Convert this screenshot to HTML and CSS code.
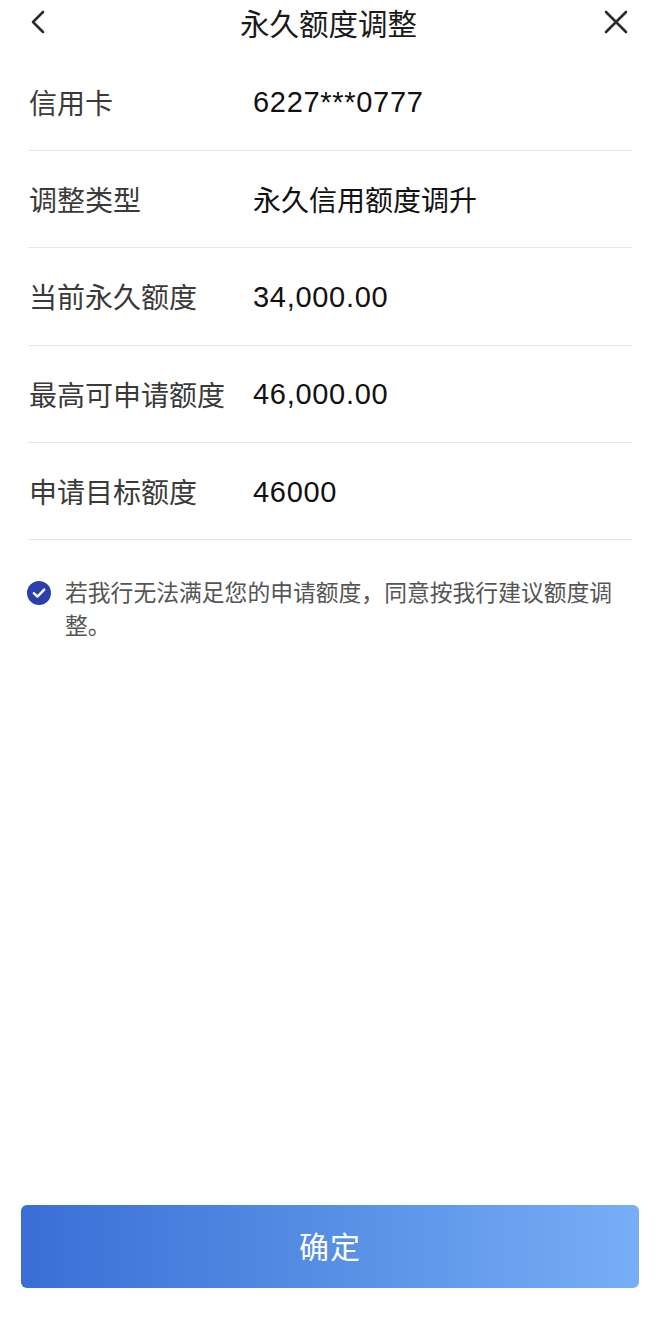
FILE: index.html
```html
<!DOCTYPE html>
<html lang="zh-CN">
<head>
<meta charset="utf-8">
<title>永久额度调整</title>
<link rel="stylesheet" href="styles.css">
</head>
<body>
<div class="page">
  <header class="nav">
    <span class="nav-btn back">
      <svg width="24" height="28" viewBox="0 0 24 28"><path d="M16 4 L6 14 L16 24" fill="none" stroke="#2b2b2b" stroke-width="2.6" stroke-linecap="round" stroke-linejoin="round"/></svg>
    </span>
    <h1 class="title">永久额度调整</h1>
    <span class="nav-btn close">
      <svg width="26" height="26" viewBox="0 0 26 26"><path d="M3 3 L23 23 M23 3 L3 23" fill="none" stroke="#2b2b2b" stroke-width="2.6" stroke-linecap="round"/></svg>
    </span>
  </header>

  <ul class="list">
    <li class="row"><span class="label">信用卡</span><span class="value">6227***0777</span></li>
    <li class="row"><span class="label">调整类型</span><span class="value cjk">永久信用额度调升</span></li>
    <li class="row"><span class="label">当前永久额度</span><span class="value">34,000.00</span></li>
    <li class="row"><span class="label">最高可申请额度</span><span class="value">46,000.00</span></li>
    <li class="row"><span class="label">申请目标额度</span><span class="value">46000</span></li>
  </ul>

  <div class="agree">
    <span class="check">
      <svg width="24" height="24" viewBox="0 0 24 24"><circle cx="12" cy="12" r="12" fill="#2b3eab"/><path d="M6.8 12.2 L10.4 15.6 L17.2 8.6" fill="none" stroke="#fff" stroke-width="2.4" stroke-linecap="round" stroke-linejoin="round"/></svg>
    </span>
    <p class="agree-text">若我行无法满足您的申请额度，同意按我行建议额度调整。</p>
  </div>

  <div class="spacer"></div>

  <div class="footer">
    <button class="confirm">确定</button>
  </div>
</div>
</body>
</html>
```

FILE: styles.css
```css
* { box-sizing: border-box; }
html, body { margin: 0; padding: 0; background: #fff; }
body {
  font-family: "Noto Sans CJK SC", "Noto Sans", sans-serif;
  color: #333;
}
.page {
  width: 660px;
  height: 1342px;
  display: flex;
  flex-direction: column;
}
.nav {
  height: 44px;
  display: flex;
  align-items: center;
  justify-content: space-between;
  padding: 0 31px 0 27px;
}
.nav-btn { display: flex; align-items: center; }
.title {
  margin: 0;
  font-size: 29.5px;
  font-weight: 400;
  color: #1a1a1a;
  line-height: 44px;
  padding-left: 3px;
}
.list {
  list-style: none;
  margin: 9.5px 28px 0 28px;
  padding: 0;
}
.row {
  height: 97.4px;
  display: flex;
  align-items: center;
  border-bottom: 1px solid #e6e6e6;
}
.label {
  width: 225px;
  flex: none;
  font-size: 28px;
  color: #3a3a3a;
  padding-left: 1px;
}
.value {
  font-family: "Liberation Sans", "Noto Sans CJK SC", sans-serif;
  font-size: 29px;
  letter-spacing: 0.7px;
  color: #111;
  padding-top: 2px;
}
.value.cjk {
  font-family: "Noto Sans CJK SC", sans-serif;
  font-size: 28px;
  letter-spacing: 0;
  padding-top: 0;
}
.agree {
  display: flex;
  align-items: flex-start;
  margin: 35px 28px 0 27px;
}
.check {
  flex: none;
  width: 24px;
  height: 24px;
  margin-top: 6px;
  margin-right: 14px;
}
.check svg { display: block; }
.agree-text {
  margin: 0;
  font-size: 22.8px;
  line-height: 33px;
  color: #555;
}
.spacer { flex: 1; }
.footer {
  padding: 0 21px 54px 21px;
}
.confirm {
  display: block;
  width: 100%;
  height: 83px;
  border: 0;
  border-radius: 6px;
  background: linear-gradient(90deg, #3a6ed6 0%, #5a92e6 55%, #77aef8 100%);
  color: #fff;
  font-family: "Noto Sans CJK SC", sans-serif;
  font-size: 30px;
  line-height: 1;
  letter-spacing: 1px;
  padding: 0 0 3px 0;
}
```
